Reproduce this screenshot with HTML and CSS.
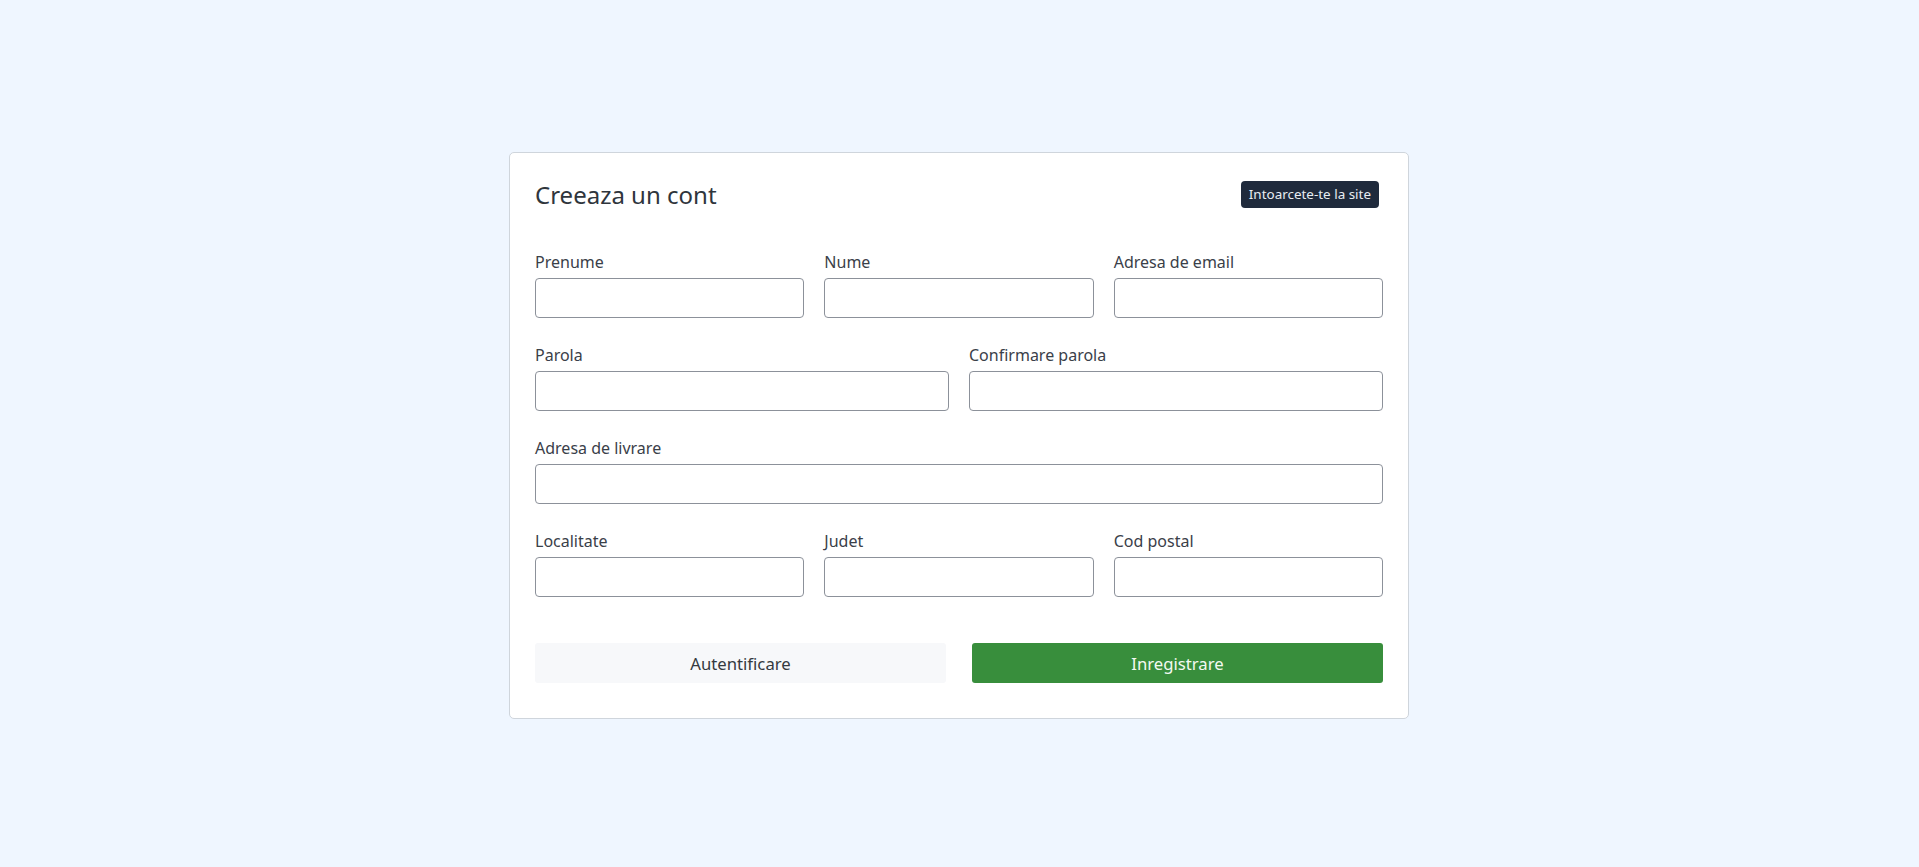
FILE: index.html
```html
<!DOCTYPE html>
<html lang="ro">
<head>
<meta charset="utf-8">
<title>Creeaza un cont</title>
<link rel="stylesheet" href="styles.css">
</head>
<body>
<main class="page">
  <section class="card">
    <header class="card-header">
      <h1 class="title">Creeaza un cont</h1>
      <a class="back-btn" href="#">Intoarcete-te la site</a>
    </header>
    <form class="form">
      <div class="row cols-3">
        <div class="field"><label>Prenume</label><input type="text"></div>
        <div class="field"><label>Nume</label><input type="text"></div>
        <div class="field"><label>Adresa de email</label><input type="email"></div>
      </div>
      <div class="row cols-2">
        <div class="field"><label>Parola</label><input type="password"></div>
        <div class="field"><label>Confirmare parola</label><input type="password"></div>
      </div>
      <div class="row cols-1">
        <div class="field"><label>Adresa de livrare</label><input type="text"></div>
      </div>
      <div class="row cols-3">
        <div class="field"><label>Localitate</label><input type="text"></div>
        <div class="field"><label>Judet</label><input type="text"></div>
        <div class="field"><label>Cod postal</label><input type="text"></div>
      </div>
      <div class="actions">
        <button type="button" class="btn btn-light">Autentificare</button>
        <button type="submit" class="btn btn-green">Inregistrare</button>
      </div>
    </form>
  </section>
</main>
</body>
</html>
```

FILE: styles.css
```css
* { box-sizing: border-box; }
html, body {
  margin: 0;
  padding: 0;
  background: #eff6ff;
  font-family: "Noto Sans", "Open Sans", sans-serif;
  color: #343a40;
}
.page {
  min-height: 867px;
  display: flex;
  justify-content: center;
  align-items: flex-start;
  padding: 152px 1px 0 0;
}
.card {
  width: 900px;
  background: #ffffff;
  border: 1px solid #cfd5dc;
  border-radius: 5px;
  padding: 25px 25px 35px 25px;
}
.card-header {
  display: flex;
  align-items: center;
  justify-content: space-between;
  height: 33px;
}
.title {
  margin: -1px 0 0 0;
  font-size: 24px;
  font-weight: 400;
  line-height: 33px;
  color: #2f353c;
}
.back-btn {
  display: inline-block;
  background: #1f2a3c;
  color: #e8edf3;
  font-size: 13.45px;
  line-height: 19px;
  padding: 4px 8px;
  border-radius: 4px;
  text-decoration: none;
  margin-right: 4px;
  margin-top: -1px;
}
.form {
  margin-top: 39px;
  display: flex;
  flex-direction: column;
  gap: 25px;
}
.row {
  display: grid;
  column-gap: 20px;
}
.cols-3 { grid-template-columns: 1fr 1fr 1fr; }
.cols-2 { grid-template-columns: 1fr 1fr; }
.cols-1 { grid-template-columns: 1fr; }
.field {
  display: flex;
  flex-direction: column;
}
.field label {
  font-size: 16px;
  line-height: 24px;
  margin-bottom: 4px;
  color: #3a4049;
}
.field input {
  height: 40px;
  border: 1px solid #8c919a;
  border-radius: 4px;
  background: #fff;
  font-family: inherit;
  font-size: 16px;
  padding: 0 10px;
  width: 100%;
}
.actions {
  margin-top: 21px;
  display: grid;
  grid-template-columns: 1fr 1fr;
  column-gap: 26px;
}
.btn {
  height: 40px;
  border: none;
  border-radius: 3px;
  font-family: inherit;
  font-size: 16.7px;
  cursor: pointer;
}
.btn-light {
  background: #f7f8fa;
  color: #343a40;
}
.btn-green {
  background: #388e3c;
  color: #f4faf2;
}
```
